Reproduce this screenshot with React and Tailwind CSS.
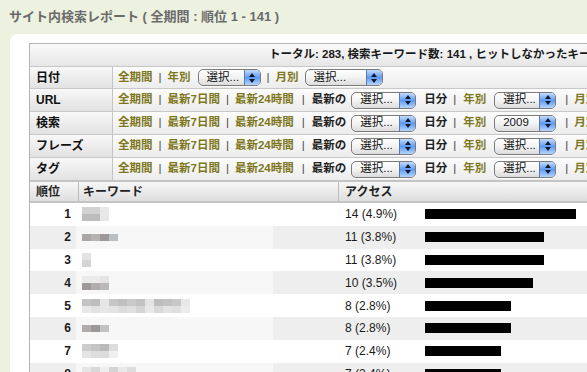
import React from 'react';

const font = "font-['Liberation_Sans','Noto_Sans_CJK_JP',sans-serif]";

const rows = [
  { rank: 1, count: 14, pct: '4.9', mosaic: [['#d2d2d2', '#d2d2d2', '#e8e8e8'], ['#bdbdbd', '#bdbdbd', '#e8e8e8']] },
  { rank: 2, count: 11, pct: '3.8', mosaic: [['#aba6a6', '#b6b2b2', '#9e9999', '#b9bec2']] },
  { rank: 3, count: 11, pct: '3.8', mosaic: [['#e3e3e3'], ['#d5d5d5']] },
  { rank: 4, count: 10, pct: '3.5', mosaic: [['#ebebeb', '#ebebeb', '#e4e4e4'], ['#9f9999', '#b2acac', '#b9b9b9']] },
  {
    rank: 5, count: 8, pct: '2.8',
    mosaic: [
      ['#c4c4c4', '#bdbdbd', '#e6e6e6', '#c6c6c6', '#c0c0c0', '#c9c9c9', '#c3c3c3', '#e4e4e4', '#bebebe', '#c2c2c2', '#c8c8c8', '#e8e8e8'],
      ['#e9e9e9', '#e2e2e2', '#e7e7e7', '#e4e4e4', '#dcdcdc', '#e0e0e0', '#d4d4d4', '#e9e9e9', '#d9d9d9', '#e3e3e3', '#dfdfdf', '#ececec'],
    ],
  },
  { rank: 6, count: 8, pct: '2.8', mosaic: [['#b1abab', '#9c9898', '#c2c2c2']] },
  { rank: 7, count: 7, pct: '2.4', mosaic: [['#cccccc', '#c4c4c4', '#bababa', '#dddddd'], ['#e4e4e4', '#dddddd', '#dcdcdc', '#efefef']] },
  { rank: 8, count: 7, pct: '2.4', mosaic: [['#e6e6e6', '#d8d8d8', '#eeeeee', '#d4d4d4', '#e9e9e9', '#dddddd'], ['#a9a4a4', '#b3b3b3', '#aaaaaa', '#b0b0b0', '#a8a8a8', '#b8b8b8']] },
];

function Sep({ className = 'mx-[6px]' }) {
  return <span className={`${className} font-normal text-[#444]`}>|</span>;
}

function Link({ children }) {
  return <span className="text-[#7d7720]">{children}</span>;
}

function Sel({ className, label = '選択...' }) {
  return (
    <span
      className={`${className} flex h-[17px] shrink-0 items-stretch overflow-hidden rounded-[5px] border border-[#7b7b7b] bg-linear-to-b from-white via-[#f3f3f3] to-[#dcdcdc] shadow-[0_1px_0_rgba(255,255,255,0.8)]`}
    >
      <span className="flex flex-1 items-center pl-[8px] text-[11.5px] font-normal text-[#111]">{label}</span>
      <span className="flex w-[16px] flex-col items-center justify-center gap-[2px] border-l border-[#5f78a6] bg-linear-to-b from-[#c3dbfb] via-[#5f9af0] to-[#b5d5fb]">
        <svg width="6" height="4" viewBox="0 0 6 4">
          <path d="M3 0 L6 4 L0 4 Z" fill="#0f1a30" />
        </svg>
        <svg width="6" height="4" viewBox="0 0 6 4">
          <path d="M0 0 L6 0 L3 4 Z" fill="#0f1a30" />
        </svg>
      </span>
    </span>
  );
}

function Label({ children }) {
  return (
    <div className="flex w-[83px] shrink-0 items-center border-r border-[#c4c4c4] bg-linear-to-b from-[#f8f8f8] to-[#e2e2e2] pl-[6px] text-[12px] text-[#111]">
      {children}
    </div>
  );
}

function FilterRow({ label, year }) {
  return (
    <div className="flex h-[23px] border-t border-[#c8c8c8]">
      <Label>{label}</Label>
      <div className="flex flex-1 items-center whitespace-nowrap bg-linear-to-b from-[#fcfcfc] to-[#ececec] pl-[5px]">
        <Link>全期間</Link>
        <Sep />
        <Link>最新7日間</Link>
        <Sep />
        <Link>最新24時間</Link>
        <Sep className="ml-[8px] mr-[7px]" />
        <span className="text-[#222]">最新の</span>
        <Sel className="ml-[5px] w-[65px]" />
        <span className="ml-[8px] text-[#222]">日分</span>
        <Sep className="ml-[6px] mr-[7px]" />
        <Link>年別</Link>
        <Sel className="ml-[8px] w-[62px]" label={year} />
        <Sep className="ml-[9px] mr-[6px]" />
        <Link>月別</Link>
        <Sel className="ml-[7px] w-[62px]" />
      </div>
    </div>
  );
}

export default function App() {
  return (
    <div className={`${font} h-[372px] w-[587px] overflow-hidden bg-[#edf2e0]`}>
      <div className="flex h-[34px] items-center pl-[9px] pb-[1px] text-[13px] font-bold text-[#6a6a6a]">
        サイト内検索レポート ( 全期間 : 順位 1 - 141 )
      </div>

      <div className="ml-[10px] w-[700px] rounded-tl-[8px] bg-white pl-[19px] pt-[9px] pb-[20px]">
        <div className="w-[660px] border-l border-t border-[#b4b4b4] text-[11.5px] font-bold">
          <div className="flex h-[22px] items-center whitespace-nowrap bg-linear-to-b from-[#fafafa] to-[#e6e6e6] pl-[239px] text-[#1a1a1a]">
            トータル: 283, 検索キーワード数: 141 , ヒットしなかったキーワード数: 0
          </div>

          <div className="flex h-[22px] border-t border-[#c8c8c8]">
            <Label>日付</Label>
            <div className="flex flex-1 items-center whitespace-nowrap bg-linear-to-b from-[#fcfcfc] to-[#ececec] pl-[5px]">
              <Link>全期間</Link>
              <Sep />
              <Link>年別</Link>
              <Sel className="ml-[7px] w-[63px]" />
              <Sep />
              <Link>月別</Link>
              <Sel className="ml-[6px] w-[78px]" />
            </div>
          </div>
          <FilterRow label="URL" year="選択..." />
          <FilterRow label="検索" year="2009" />
          <FilterRow label="フレーズ" year="選択..." />
          <FilterRow label="タグ" year="選択..." />

          <div className="grid h-[23px] grid-cols-[48px_260px_1fr] border-y-2 border-[#c4c4c4] bg-linear-to-b from-[#f7f7f7] to-[#dedede] text-[12px] text-[#222]">
            <div className="flex items-center pl-[6px]">順位</div>
            <div className="flex items-center border-l border-[#bcbcbc] pl-[4px]">キーワード</div>
            <div className="flex items-center border-l border-[#bcbcbc] pl-[6px]">アクセス</div>
          </div>

          {rows.map((r, i) => (
            <div
              key={r.rank}
              className={`grid h-[22.8px] grid-cols-[48px_260px_1fr] font-normal text-[12px] text-[#1a1a1a] ${i % 2 === 1 ? 'bg-[#eeeeee]' : 'bg-white'}`}
            >
              <div className="flex items-center justify-end pr-[7px] font-bold">{r.rank}</div>
              <div className="flex items-center pl-[4px]">
                <div className={`flex h-full w-[197px] -ml-[6px] items-center pl-[6px] ${i % 2 === 1 ? 'bg-[#f7f7f7]' : ''}`}>
                  <div className="flex flex-col">
                    {r.mosaic.map((line, li) => (
                      <div key={li} className="flex">
                        {line.map((c, ci) => (
                          <span key={ci} className="h-[7px] w-[9px]" style={{ background: c }} />
                        ))}
                      </div>
                    ))}
                  </div>
                </div>
              </div>
              <div className="flex items-center pl-[7px]">
                <span className="w-[80px]">
                  {r.count} ({r.pct}%)
                </span>
                <span className="h-[10px] bg-black" style={{ width: Math.round(r.count * 10.8) }} />
              </div>
            </div>
          ))}
        </div>
      </div>
    </div>
  );
}
